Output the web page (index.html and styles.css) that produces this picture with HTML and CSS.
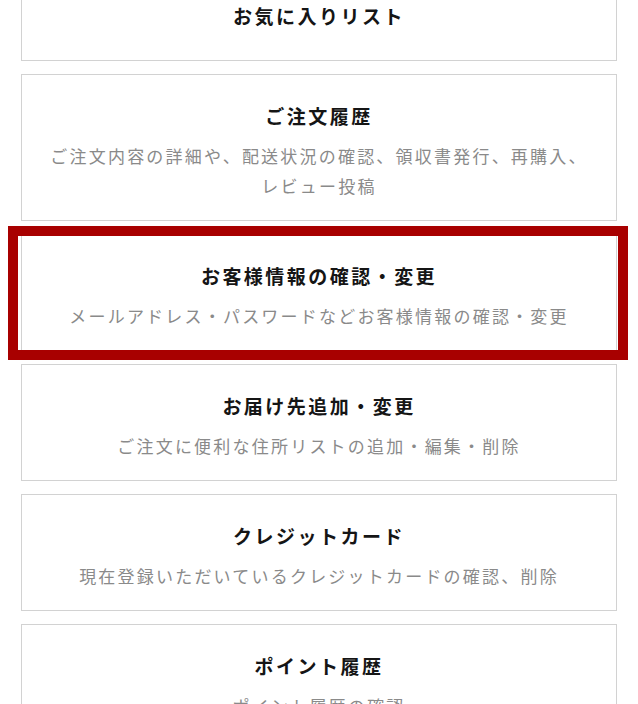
FILE: index.html
```html
<!DOCTYPE html>
<html lang="ja">
<head>
    <meta charset="UTF-8">
    <meta name="viewport" content="width=device-width, initial-scale=1.0">
    <title>マイページ</title>
    <link rel="stylesheet" href="styles.css">
</head>
<body>
    <div class="menu-list">
        <a class="menu-card title-only" href="#">
            <div class="menu-title">お気に入りリスト</div>
        </a>
        <a class="menu-card" href="#">
            <div class="menu-title">ご注文履歴</div>
            <div class="menu-desc">ご注文内容の詳細や、配送状況の確認、領収書発行、再購入、レビュー投稿</div>
        </a>
        <a class="menu-card highlighted" href="#">
            <div class="menu-title">お客様情報の確認・変更</div>
            <div class="menu-desc">メールアドレス・パスワードなどお客様情報の確認・変更</div>
        </a>
        <a class="menu-card" href="#">
            <div class="menu-title">お届け先追加・変更</div>
            <div class="menu-desc">ご注文に便利な住所リストの追加・編集・削除</div>
        </a>
        <a class="menu-card" href="#">
            <div class="menu-title">クレジットカード</div>
            <div class="menu-desc">現在登録いただいているクレジットカードの確認、削除</div>
        </a>
        <a class="menu-card" href="#">
            <div class="menu-title">ポイント履歴</div>
            <div class="menu-desc">ポイント履歴の確認</div>
        </a>
    </div>
</body>
</html>
```

FILE: styles.css
```css
body {
    margin: 0;
    padding: 0 21px;
    background: #fff;
    font-family: "Noto Sans CJK JP", "Noto Sans", sans-serif;
    overflow: hidden;
}
.menu-list {
    display: flex;
    flex-direction: column;
    gap: 13px;
    margin-top: -26px;
}
.menu-card {
    position: relative;
    display: block;
    border: 1px solid #d2d2d2;
    padding: 27px 24px 19px;
    text-align: center;
    text-decoration: none;
}
.menu-card.title-only {
    padding-bottom: 30px;
}
.menu-title {
    font-size: 19px;
    line-height: 28px;
    font-weight: 700;
    letter-spacing: 0.13em;
    color: #151515;
}
.menu-desc {
    margin-top: 11px;
    font-size: 17px;
    line-height: 30px;
    letter-spacing: 0.13em;
    color: #8a8a8a;
}
.highlighted::after {
    content: "";
    position: absolute;
    top: -9px;
    bottom: -10px;
    left: -14px;
    right: -12px;
    border: 10px solid #a80000;
}
```
